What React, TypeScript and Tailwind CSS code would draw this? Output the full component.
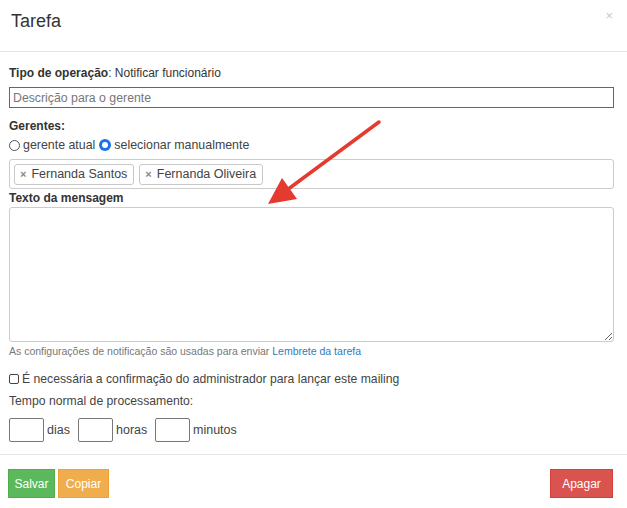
import React from "react";

export default function App() {
  return (
    <div className="relative w-[627px] h-[508px] bg-white text-[#333] font-['Liberation_Sans',Arial,sans-serif] overflow-hidden">
      {/* header */}
      <div className="h-[52px] border-b border-[#e5e5e5] flex items-start justify-between pl-[11px] pr-[14px] pt-[9px]">
        <h1 className="text-[18px] leading-[24px] text-[#333] font-light">Tarefa</h1>
        <span className="text-[#c8c8c8] text-[13px] leading-[13px] mt-0">×</span>
      </div>

      {/* body */}
      <div className="px-[9px] pt-[13px]">
        <div className="text-[12px] leading-[16px]">
          <span className="font-bold">Tipo de operação</span>: Notificar funcionário
        </div>
        <input
          className="mt-[6px] block w-[605px] h-[21px] border border-[#666] px-[3px] text-[12.3px] placeholder:text-[#777] outline-none"
          placeholder="Descrição para o gerente"
        />
        <div className="mt-[10px] text-[12px] leading-[16px] font-bold">Gerentes:</div>
        <div className="mt-[2px] flex items-center text-[12.4px] leading-[18px] text-[#444]">
          <span className="inline-block w-[11px] h-[11px] rounded-full border border-[#555] mr-[3px]"></span>
          <span>gerente atual</span>
          <span className="ml-[4px] mr-[3px] inline-flex items-center justify-center w-[12px] h-[12px] rounded-full bg-[#1a73e8]">
            <span className="w-[6px] h-[6px] rounded-full bg-white border-0"></span>
          </span>
          <span>selecionar manualmente</span>
        </div>
        <div className="mt-[5px] w-[605px] h-[30px] border border-[#ccc] rounded-[3px] flex items-center gap-[5px] pl-[4px]">
          {["Fernanda Santos", "Fernanda Oliveira"].map((n) => (
            <span
              key={n}
              className="h-[21px] flex items-center border border-[#c8c8c8] rounded-[3px] pl-[5px] pr-[6px] text-[12.5px] text-[#444]"
            >
              <span className="text-[#888] text-[11px] mr-[5px] font-bold">×</span>
              {n}
            </span>
          ))}
        </div>
        <div className="mt-[1px] text-[12px] leading-[16px] font-bold">Texto da mensagem</div>
        <textarea className="mt-[1px] block w-[605px] h-[135px] border border-[#ccc] rounded-[3px] outline-none resize-y"></textarea>
        <div className="mt-[2px] text-[10.5px] leading-[14px] text-[#777]">
          As configurações de notificação são usadas para enviar{" "}
          <span className="text-[#337ab7]">Lembrete da tarefa</span>
        </div>
        <div className="mt-[13px] flex items-center text-[12.2px] leading-[16px] text-[#444]">
          <span className="inline-block w-[10px] h-[10px] border border-[#444] rounded-[2px] mr-[3px]"></span>
          É necessária a confirmação do administrador para lançar este mailing
        </div>
        <div className="mt-[6px] text-[12.2px] leading-[16px] text-[#444]">Tempo normal de processamento:</div>
        <div className="mt-[9px] flex items-center text-[12.5px] text-[#444]">
          <span className="w-[35px] h-[24px] border border-[#777] rounded-[2px]"></span>
          <span className="ml-[3px] w-[31px]">dias</span>
          <span className="w-[35px] h-[24px] border border-[#777] rounded-[2px]"></span>
          <span className="ml-[3px] w-[39px]">horas</span>
          <span className="w-[35px] h-[24px] border border-[#777] rounded-[2px]"></span>
          <span className="ml-[3px]">minutos</span>
        </div>
      </div>

      {/* footer */}
      <div className="absolute left-0 right-0 top-[454px] border-t border-[#e5e5e5] flex justify-between px-[8px] pt-[14px]">
        <div className="flex gap-[3px]">
          <button className="h-[29px] w-[47px] bg-[#5cb85c] border border-[#4cae4c] text-white text-[12px]">Salvar</button>
          <button className="h-[29px] w-[51px] bg-[#f0ad4e] border border-[#eea236] text-white text-[12px]">Copiar</button>
        </div>
        <button className="mr-[6px] h-[29px] w-[63px] bg-[#d9534f] border border-[#d43f3a] text-white text-[12px]">Apagar</button>
      </div>

      {/* arrow annotation */}
      <svg className="absolute left-0 top-0 pointer-events-none" width="627" height="508">
        <line x1="379" y1="122" x2="287" y2="190" stroke="#e53a2f" strokeWidth="3.5" strokeLinecap="round" />
        <polygon points="268,204 282,178 297,199" fill="#e53a2f" />
      </svg>
    </div>
  );
}
